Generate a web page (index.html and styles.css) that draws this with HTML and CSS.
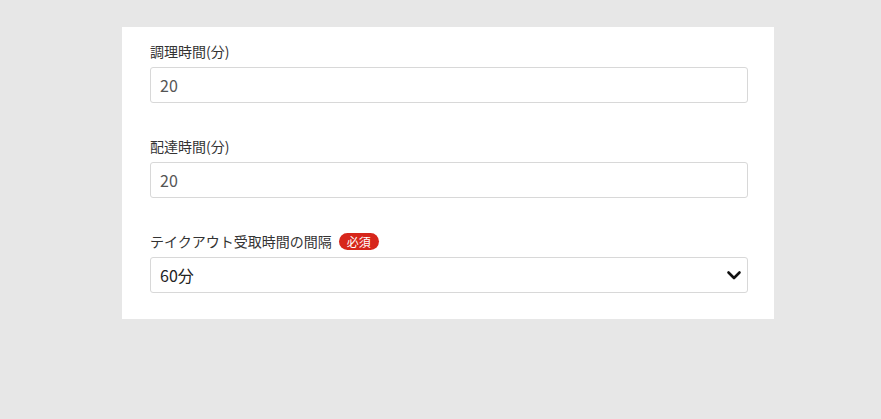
FILE: index.html
```html
<!DOCTYPE html>
<html>
    <head>
        <meta charset="utf-8" />
        <title>受取設定</title>
        <meta name="viewport" content="width=device-width, initial-scale=1" />
        <link rel="stylesheet" href="styles.css">
    </head>

    <body>
        <div class="settings-card">
            <div class="form-group">
                <label class="form-label">調理時間(分)</label>
                <input class="form-input" type="text" value="20" />
            </div>

            <div class="form-group">
                <label class="form-label">配達時間(分)</label>
                <input class="form-input" type="text" value="20" />
            </div>

            <div class="form-group">
                <label class="form-label">テイクアウト受取時間の間隔 <span class="badge-required">必須</span></label>
                <div class="select-wrap">
                    <select class="form-select">
                        <option>60分</option>
                    </select>
                    <svg class="select-arrow" width="16" height="12" viewBox="0 0 16 12">
                        <path d="M2.5 3.5 L8 9 L13.5 3.5" fill="none" stroke="#111" stroke-width="2.6" stroke-linecap="round" stroke-linejoin="round" />
                    </svg>
                </div>
            </div>
        </div>
    </body>
</html>
```

FILE: styles.css
```css
html,
body {
    font-family: 'Noto Sans CJK JP', 'Noto Sans', sans-serif;
    padding: 0;
    margin: 0;
    --bg-color: #e7e7e7;
    --border-color: #d8d8d8;
    --text-color: #333;

    background: var(--bg-color);
    color: var(--text-color);
}

.settings-card {
    width: 652px;
    box-sizing: border-box;
    margin: 27px 0 0 122px;
    background: #fff;
    padding: 14px 26px 26px 28px;
    display: flex;
    flex-direction: column;
    gap: 33px;
}

.form-group {
    display: flex;
    flex-direction: column;
}

.form-label {
    display: flex;
    align-items: center;
    font-size: 14px;
    line-height: 21px;
    height: 21px;
    margin-bottom: 5px;
    color: #333;
}

.badge-required {
    display: inline-block;
    margin-left: 7px;
    background: #d7261b;
    color: #fff;
    font-size: 12px;
    line-height: 17px;
    height: 17px;
    padding: 0 8px;
    border-radius: 9px;
}

.form-input,
.form-select {
    box-sizing: border-box;
    width: 100%;
    height: 36px;
    margin: 0;
    padding: 0 9px;
    border: 1px solid var(--border-color);
    border-radius: 3px;
    background: #fff;
    font-family: inherit;
    font-size: 16px;
    outline: none;
}

.form-input {
    color: #555;
}

.select-wrap {
    position: relative;
}

.form-select {
    appearance: none;
    color: #222;
}

.select-arrow {
    position: absolute;
    right: 6px;
    top: 12px;
    pointer-events: none;
}
```
